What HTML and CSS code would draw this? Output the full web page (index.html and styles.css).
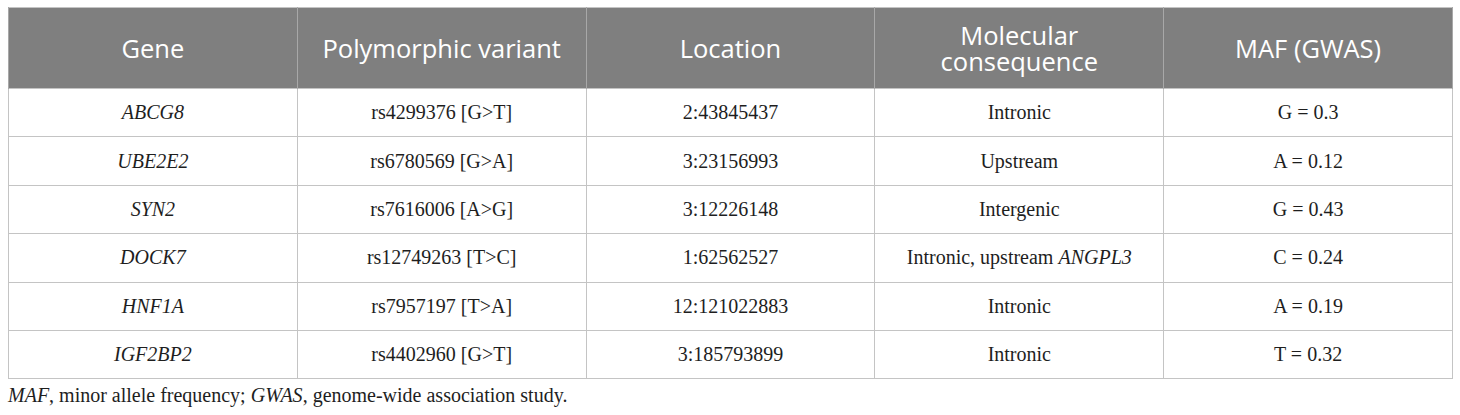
FILE: index.html
```html
<!DOCTYPE html>
<html>
<head>
<meta charset="utf-8">
<link rel="stylesheet" href="styles.css">
</head>
<body>
<table class="data">
  <thead>
    <tr>
      <th>Gene</th>
      <th>Polymorphic variant</th>
      <th>Location</th>
      <th>Molecular<br>consequence</th>
      <th>MAF (GWAS)</th>
    </tr>
  </thead>
  <tbody>
    <tr><td><i>ABCG8</i></td><td>rs4299376 [G&gt;T]</td><td>2:43845437</td><td>Intronic</td><td>G = 0.3</td></tr>
    <tr><td><i>UBE2E2</i></td><td>rs6780569 [G&gt;A]</td><td>3:23156993</td><td>Upstream</td><td>A = 0.12</td></tr>
    <tr><td><i>SYN2</i></td><td>rs7616006 [A&gt;G]</td><td>3:12226148</td><td>Intergenic</td><td>G = 0.43</td></tr>
    <tr><td><i>DOCK7</i></td><td>rs12749263 [T&gt;C]</td><td>1:62562527</td><td>Intronic, upstream <i>ANGPL3</i></td><td>C = 0.24</td></tr>
    <tr><td><i>HNF1A</i></td><td>rs7957197 [T&gt;A]</td><td>12:121022883</td><td>Intronic</td><td>A = 0.19</td></tr>
    <tr><td><i>IGF2BP2</i></td><td>rs4402960 [G&gt;T]</td><td>3:185793899</td><td>Intronic</td><td>T = 0.32</td></tr>
  </tbody>
</table>
<p class="note"><i>MAF</i>, minor allele frequency; <i>GWAS</i>, genome-wide association study.</p>
</body>
</html>
```

FILE: styles.css
```css
html, body {
  margin: 0;
  padding: 0;
  background: #ffffff;
}
body {
  padding: 7px 7px 0 8px;
}
.data {
  width: 1445px;
  border-collapse: collapse;
  table-layout: fixed;
  border: 1px solid #c4c4c4;
}
.data th {
  background: #7f7f7f;
  color: #ffffff;
  font-family: "Open Sans", "Liberation Sans", sans-serif;
  font-weight: 400;
  font-size: 25.5px;
  line-height: 26px;
  height: 80px;
  padding: 0 8px;
  text-align: center;
  vertical-align: middle;
  border-left: 1px solid #a8a8a8;
  border-right: 1px solid #a8a8a8;
}
.data td {
  font-family: "Liberation Serif", "DejaVu Serif", serif;
  font-size: 20px;
  color: #1e1e1e;
  text-align: center;
  vertical-align: middle;
  height: 47.4px;
  padding: 0 8px;
  border: 1px solid #c4c4c4;
}
.note {
  margin: 5px 0 0 0;
  font-family: "Liberation Serif", "DejaVu Serif", serif;
  font-size: 20px;
  color: #1e1e1e;
}
```
